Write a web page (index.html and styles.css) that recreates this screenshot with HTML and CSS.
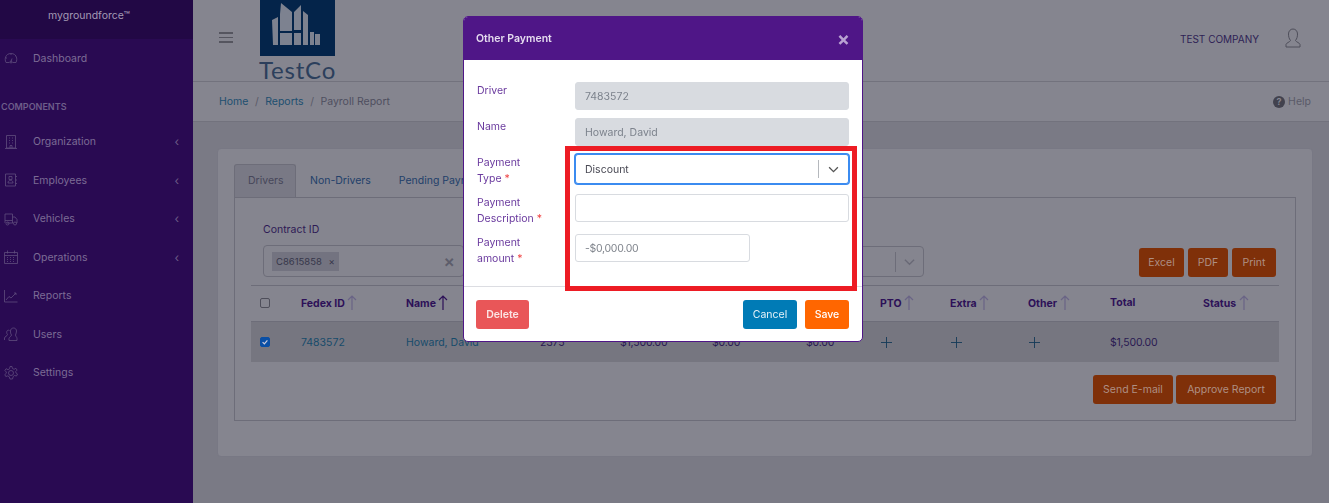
FILE: index.html
```html
<!DOCTYPE html>
<html lang="en">
<head>
  <meta charset="UTF-8">
  <title>Payroll Report</title>
  <link rel="stylesheet" href="styles.css">
</head>
<body>

<div class="layout">
  <aside class="sidebar">
    <div class="brand">mygroundforce™</div>
    <nav class="nav">
      <a class="nav-item">
        <svg class="nav-icon" viewBox="0 0 14 14"><path d="M2 11.500C.2 8 1.500 2.500 7 2.500s6.800 5.500 5 9H8.500M5.500 11.500H2M8 7.500 7 10.500"/><circle cx="7" cy="11" r="1"/><path d="M3 7h-1M11 5l1-.5M7 3v1"/></svg>
        <span>Dashboard</span>
      </a>
      <div class="nav-title">COMPONENTS</div>
      <a class="nav-item">
        <svg class="nav-icon" viewBox="0 0 14 14"><path d="M2.500.5h9v12.500h-9zM1 13.500h12M5 3h1M8 3h1M5 5.500h1M8 5.500h1M5 8h1M8 8h1M6 13v-2.500h2V13"/></svg>
        <span>Organization</span><i class="nav-caret">‹</i>
      </a>
      <a class="nav-item">
        <svg class="nav-icon" viewBox="0 0 14 14"><path d="M1.500 1h10v12h-10zM11.500 3.500H13M11.500 7H13M11.500 10.500H13M4 10c0-2 1-2.500 2.500-2.500S9 8 9 10zM5 3.500h3v3H5z"/></svg>
        <span>Employees</span><i class="nav-caret">‹</i>
      </a>
      <a class="nav-item">
        <svg class="nav-icon" viewBox="0 0 14 14"><path d="M1 11V2h7.500v9M8.500 5H11l2 2.500V11h-1M1 8.500h7.500M3 11h6.500"/><circle cx="3.500" cy="11.500" r="1.500"/><circle cx="11" cy="11.500" r="1.500"/></svg>
        <span>Vehicles</span><i class="nav-caret">‹</i>
      </a>
      <a class="nav-item">
        <svg class="nav-icon" viewBox="0 0 14 14"><path d="M.5 2.500h13v11H.5zM.5 5.500h13M3.500.5v3M10.500.5v3M3 7.500h1M6 7.500h1M9 7.500h1M3 9.500h1M6 9.500h1M9 9.500h1M3 11.500h1M6 11.500h1M9 11.500h1"/></svg>
        <span>Operations</span><i class="nav-caret">‹</i>
      </a>
      <a class="nav-item">
        <svg class="nav-icon" viewBox="0 0 14 14"><path d="M.5 1v12h13M2 11l3-3.500 2 1.500 5-5M10 4h2v2"/></svg>
        <span>Reports</span>
      </a>
      <a class="nav-item">
        <svg class="nav-icon" viewBox="0 0 14 14"><path d="M.5 13v-2c0-1.500 3-2 3-3.500C2.500 6.500 2.500 5 3 4c.5-1 2-1 2.500-.5M5 13.500v-2c0-1.500 2.500-2 2.500-3.500-1-1.500-1-2.500-1-4s1-3 3-3 3 1.500 3 3-.5 2.500-1 4c0 1.500 1.500 2 1.500 3.500v2z"/></svg>
        <span>Users</span>
      </a>
      <a class="nav-item">
        <svg class="nav-icon" viewBox="0 0 14 14"><circle cx="7" cy="7" r="2.500"/><path d="M6 .5h2l.4 2 1.700.8 1.800-1 1.200 1.800-1.400 1.400.3 1.500 1.500 1-1 2-2-.5-1.300 1.100-.7 2.400H6l-.7-2.200-1.500-.9-2 .6-1-1.900 1.500-1.300V6L.9 4.500l1.200-1.800 1.900 1 1.600-1z"/></svg>
        <span>Settings</span>
      </a>
    </nav>
  </aside>

  <div class="main">
    <header class="topbar">
      <div class="burger"><span></span><span></span><span></span></div>
      <div class="logo">
        <div class="logo-mark">
          <svg viewBox="0 0 75 56" width="75" height="56">
            <path class="logo-bld" d="M12 20l6-3v28h-5zM20 14l1-11 11 9v19H20zM20 33h12v12H20zM34 12l7-7v25h-7zM34 33h7v12h-7zM43 11l5 4v30h-5zM50 32h4v13h-4zM55 34h5v11h-5z"/>
          </svg>
        </div>
        <div class="logo-name">TestCo</div>
      </div>
      <div class="company">TEST COMPANY</div>
      <svg class="user-icon" viewBox="0 0 16 20"><path d="M1 19v-2.500c0-1.500 4-2.500 4.500-4C4 10.500 3.500 8.500 3.500 6c0-3 2-5 4.500-5s4.500 2 4.500 5c0 2.500-.5 4.500-2 6.500.5 1.500 4.500 2.500 4.500 4V19z"/></svg>
    </header>

    <div class="crumbs">
      <a>Home</a><b>/</b><a>Reports</a><b>/</b><span>Payroll Report</span>
      <div class="help"><i>?</i>Help</div>
    </div>

    <div class="content">
      <div class="card">
        <div class="tabs">
          <div class="tab active">Drivers</div>
          <div class="tab">Non-Drivers</div>
          <div class="tab">Pending Payroll</div>
        </div>
        <div class="pane">
          <div class="filters">
            <div class="filter">
              <label class="filter-label">Contract ID</label>
              <div class="multi">
                <span class="tag">C8615858 <em>×</em></span>
                <span class="multi-clear">×</span>
              </div>
            </div>
            <div class="week">
              <span class="week-sep"></span>
              <svg class="week-arrow" viewBox="0 0 12 8"><path d="M1 1.500l5 5 5-5"/></svg>
            </div>
            <div class="export">
              <button class="btn-dark btn-excel">Excel</button>
              <button class="btn-dark btn-pdf">PDF</button>
              <button class="btn-dark btn-print">Print</button>
            </div>
          </div>

          <div class="grid-row grid-head">
            <div><span class="check"></span></div>
            <div>Fedex ID <svg class="sort" viewBox="0 0 10 15"><path d="M5 15V1M1 5l4-4 4 4"/></svg></div>
            <div>Name <svg class="sort on" viewBox="0 0 10 15"><path d="M5 15V1M1 5l4-4 4 4"/></svg></div>
            <div></div>
            <div></div>
            <div></div>
            <div></div>
            <div>PTO <svg class="sort" viewBox="0 0 10 15"><path d="M5 15V1M1 5l4-4 4 4"/></svg></div>
            <div>Extra <svg class="sort" viewBox="0 0 10 15"><path d="M5 15V1M1 5l4-4 4 4"/></svg></div>
            <div>Other <svg class="sort" viewBox="0 0 10 15"><path d="M5 15V1M1 5l4-4 4 4"/></svg></div>
            <div>Total</div>
            <div>Status <svg class="sort" viewBox="0 0 10 15"><path d="M5 15V1M1 5l4-4 4 4"/></svg></div>
          </div>
          <div class="grid-row grid-data">
            <div><span class="check checked"><svg viewBox="0 0 10 10"><path d="M2 5.200l2.200 2.200L8 3"/></svg></span></div>
            <div><a>7483572</a></div>
            <div><a>Howard, David</a></div>
            <div class="money">2375</div>
            <div class="money">$1,500.00</div>
            <div class="money">$0.00</div>
            <div class="money">$0.00</div>
            <div><svg class="plus" viewBox="0 0 11 11"><path d="M5.500 0v11M0 5.500h11"/></svg></div>
            <div><svg class="plus" viewBox="0 0 11 11"><path d="M5.500 0v11M0 5.500h11"/></svg></div>
            <div><svg class="plus" viewBox="0 0 11 11"><path d="M5.500 0v11M0 5.500h11"/></svg></div>
            <div class="money">$1,500.00</div>
            <div></div>
          </div>

          <div class="actions">
            <button class="btn-dark btn-send">Send E-mail</button>
            <button class="btn-dark btn-approve">Approve Report</button>
          </div>
        </div>
      </div>
    </div>
  </div>
</div>

<div class="modal">
  <div class="modal-head">
    <h3>Other Payment</h3>
    <span class="modal-close">×</span>
  </div>
  <div class="modal-body">
    <div class="form-row short">
      <label>Driver</label>
      <input class="field" type="text" value="7483572" disabled>
    </div>
    <div class="form-row short">
      <label>Name</label>
      <input class="field" type="text" value="Howard, David" disabled>
    </div>
    <div class="form-row">
      <label>Payment<br>Type <u>*</u></label>
      <div class="field select-focus">
        <span>Discount</span>
        <span class="select-sep"></span>
        <svg class="select-arrow" viewBox="0 0 12 8"><path d="M1 1.500l5 5 5-5"/></svg>
      </div>
    </div>
    <div class="form-row">
      <label>Payment<br>Description <u>*</u></label>
      <input class="field" type="text">
    </div>
    <div class="form-row">
      <label>Payment<br>amount <u>*</u></label>
      <input class="field amount" type="text" placeholder="-$0,000.00">
    </div>
  </div>
  <div class="modal-foot">
    <button class="btn btn-delete">Delete</button>
    <button class="btn btn-cancel">Cancel</button>
    <button class="btn btn-save">Save</button>
  </div>
</div>

<div class="callout"></div>

</body>
</html>
```

FILE: styles.css
```css
* {
  box-sizing: border-box;
}

body {
  margin: 0;
  height: 503px;
  overflow: hidden;
  font-family: Inter, "Noto Sans", sans-serif;
  font-size: 10.5px;
  background-color: #7a7a85;
  color: #33204f;
}

button {
  font-family: inherit;
  font-size: inherit;
}

.layout {
  display: flex;
  height: 503px;
}

/* sidebar */
.sidebar {
  width: 193px;
  flex-shrink: 0;
  background-color: #290a52;
  color: #7c6c95;
}

.brand {
  height: 39px;
  padding-top: 9px;
  padding-left: 48px;
  background-color: #220845;
  color: #a49ab4;
}

.nav-item {
  display: flex;
  align-items: center;
  height: 38.500px;
  padding-left: 4px;
}

.nav-item span {
  margin-left: 15px;
}

.nav-icon {
  width: 14px;
  height: 14px;
  fill: none;
  stroke: #5f4c7d;
  stroke-width: 0.8;
}

.nav-caret {
  margin-left: auto;
  margin-right: 14px;
  font-style: normal;
  font-size: 12px;
  color: #6c5b87;
}

.nav-title {
  height: 31px;
  padding-top: 23px;
  padding-left: 1px;
  margin-bottom: 14px;
  font-size: 9px;
  font-weight: 600;
  color: #6e5e8a;
}

/* main column */
.main {
  flex: 1;
  min-width: 0;
}

.topbar {
  display: flex;
  align-items: center;
  height: 82px;
  padding-left: 26px;
  padding-right: 28px;
  background-color: #85858f;
  border-bottom: 1px solid #72727d;
}

.burger {
  display: flex;
  flex-direction: column;
  gap: 3px;
  width: 14px;
  margin-top: -6px;
}

.burger span {
  height: 1.500px;
  background-color: #55555f;
}

.logo {
  align-self: flex-start;
  margin-left: 27px;
  width: 75px;
}

.logo-mark {
  height: 56px;
  background-color: #04244a;
}

.logo-mark svg {
  display: block;
}

.logo-bld {
  fill: #7d8290;
}

.logo-name {
  margin-left: -1px;
  padding-top: 1px;
  font-family: Lato, sans-serif;
  font-size: 24px;
  line-height: 25px;
  letter-spacing: 0.800px;
  white-space: nowrap;
  color: #2c3f5c;
}

.company {
  margin-left: auto;
  margin-top: -4px;
  font-size: 10px;
  color: #2e1f55;
}

.user-icon {
  width: 16px;
  height: 20px;
  margin-left: 26px;
  margin-top: -6px;
  fill: none;
  stroke: #4e4e5a;
  stroke-width: 1;
}

.crumbs {
  display: flex;
  align-items: center;
  height: 40px;
  padding-left: 26px;
  padding-right: 18px;
  background-color: #85858f;
  border-bottom: 1px solid #72727d;
  color: #4f4f5f;
}

.crumbs a {
  color: #204f6f;
}

.crumbs b {
  margin: 0 6.500px;
  font-weight: 400;
  color: #5a5a68;
}

.help {
  display: flex;
  align-items: center;
  margin-left: auto;
  color: #5a5a68;
}

.help i {
  width: 12px;
  height: 12px;
  margin-right: 3px;
  border-radius: 50%;
  background-color: #42424e;
  color: #85858f;
  font-size: 9px;
  font-style: normal;
  font-weight: 700;
  line-height: 12px;
  text-align: center;
}

.content {
  padding: 26px 16px 0 24px;
}

.card {
  height: 309px;
  padding: 15px 16px;
  background-color: #85858f;
  border: 1px solid #787884;
  border-radius: 4px;
}

.tabs {
  display: flex;
  height: 33px;
}

.tab {
  padding: 10px 14px 0;
  color: #22406a;
}

.tab.active {
  width: 62px;
  padding-top: 9px;
  padding-left: 13px;
  background-color: #797985;
  border: 1px solid #6d6d79;
  border-bottom: 0;
  border-radius: 3px 3px 0 0;
  color: #47475a;
}

.pane {
  height: 224px;
  padding: 24px 16px 0;
  border: 1px solid #6d6d79;
}

.filters {
  display: flex;
  align-items: flex-end;
  height: 55px;
  padding: 0 3px 0 12px;
}

.filter-label {
  display: block;
  margin-bottom: 8px;
  line-height: 14px;
  color: #2e1a55;
}

.multi {
  display: flex;
  align-items: center;
  width: 201px;
  height: 32px;
  padding: 0 8px;
  border: 1px solid #6d6d79;
  border-radius: 4px;
}

.tag {
  height: 19px;
  padding: 0 4px;
  background-color: #737380;
  color: #36364a;
  font-size: 9.500px;
  line-height: 19px;
}

.tag em {
  margin-left: 4px;
  font-style: normal;
}

.multi-clear {
  margin-left: auto;
  color: #5d5d6b;
  font-size: 17px;
  font-weight: 600;
}

.week {
  display: flex;
  align-items: center;
  justify-content: flex-end;
  width: 460px;
  height: 31px;
  border: 1px solid #6d6d79;
  border-radius: 4px;
}

.week-sep {
  width: 1px;
  height: 20px;
  background-color: #6d6d79;
}

.week-arrow {
  width: 11px;
  height: 8px;
  margin: 0 8px;
  fill: none;
  stroke: #696976;
  stroke-width: 1.500;
}

.export {
  display: flex;
  gap: 4px;
  margin-left: auto;
}

.btn-dark {
  height: 29px;
  padding: 0;
  border: 0;
  border-radius: 3px;
  background-color: #7f3009;
  color: #ae8f83;
}

.btn-excel {
  width: 45px;
}

.btn-pdf {
  width: 40px;
}

.btn-print {
  width: 44px;
}

.btn-send {
  width: 80px;
}

.btn-approve {
  width: 100px;
}

.grid-row {
  display: grid;
  grid-template-columns: 50px 105px 134px 80px 92px 94px 74px 70px 78px 82px 93px 76px;
  align-items: center;
}

.grid-row > div:first-child {
  padding-left: 9px;
}

.grid-head {
  height: 37px;
  margin-top: 8px;
  padding-bottom: 2px;
  border-top: 1px solid #6d6d79;
  border-bottom: 1px solid #6d6d79;
  font-weight: 700;
  color: #2d1158;
}

.grid-data {
  height: 40px;
  background-color: #767680;
  color: #2a1a52;
}

.grid-data a {
  color: #174b6b;
}

.money {
  letter-spacing: -0.200px;
}

.check {
  display: block;
  width: 10px;
  height: 10px;
  border: 1px solid #4e4e5a;
  border-radius: 2px;
}

.check.checked {
  background-color: #0a4fa5;
  border-color: #0a4fa5;
}

.check svg {
  display: block;
  width: 8px;
  height: 8px;
  fill: none;
  stroke: #ccd;
  stroke-width: 1.500;
}

.sort {
  width: 10px;
  height: 15px;
  vertical-align: -3px;
  fill: none;
  stroke: #6a6486;
  stroke-width: 1.200;
}

.sort.on {
  stroke: #2d1158;
}

.plus {
  display: block;
  width: 11px;
  height: 11px;
  margin-left: 1px;
  fill: none;
  stroke: #143a58;
  stroke-width: 0.900;
}

.actions {
  display: flex;
  justify-content: flex-end;
  gap: 3px;
  margin-top: 13px;
  padding-right: 3px;
}

/* modal */
.modal {
  position: fixed;
  top: 16px;
  left: 463px;
  width: 400px;
  height: 326px;
  background-color: #fff;
  border: 1px solid #4f1687;
  border-radius: 5px;
  overflow: hidden;
}

.modal-head {
  display: flex;
  justify-content: space-between;
  height: 43px;
  padding: 15px 12px 0;
  background-color: #4f1687;
}

.modal-head h3 {
  margin: 0;
  font-size: 10.500px;
  font-weight: 600;
  line-height: 14px;
  color: #e5dcef;
}

.modal-close {
  margin-top: 1px;
  font-size: 19px;
  font-weight: 700;
  line-height: 14px;
  color: #b9a2d2;
}

.modal-body {
  display: flex;
  flex-direction: column;
  gap: 8px;
  height: 227px;
  padding: 22px 13px 0;
  border-bottom: 1px solid #dcdde2;
}

.form-row {
  display: grid;
  grid-template-columns: 98px 274px;
  align-items: start;
  height: 32px;
}

.form-row.short {
  height: 28px;
}

.form-row label {
  padding-top: 1px;
  line-height: 16px;
  color: #6a3a9e;
}

.form-row u {
  color: #ef4444;
  text-decoration: none;
}

.field {
  width: 274px;
  height: 28px;
  padding: 0 9px;
  background-color: #fff;
  border: 1px solid #d8dbe0;
  border-radius: 3px;
  font-family: inherit;
  font-size: 10.500px;
  color: #4a4a55;
}

.field:disabled {
  background-color: #d8dbe0;
  color: #7c828c;
  opacity: 1;
}

.field::placeholder {
  color: #80858d;
}

.amount {
  width: 175px;
  letter-spacing: -0.300px;
}

.select-focus {
  display: flex;
  align-items: center;
  height: 30px;
  padding-right: 0;
  border-color: #3b8bf0;
  box-shadow: 0 0 0 1px #3b8bf0;
}

.select-sep {
  width: 1px;
  height: 18px;
  margin-left: auto;
  background-color: #b5b8bd;
}

.select-arrow {
  width: 11px;
  height: 7px;
  margin: 0 9px;
  fill: none;
  stroke: #555;
  stroke-width: 1.500;
}

.modal-foot {
  display: flex;
  gap: 8px;
  padding: 13px 13px 0 12px;
}

.btn {
  height: 29px;
  border: 0;
  border-radius: 3px;
  color: #fff;
}

.btn-delete {
  width: 53px;
  margin-right: auto;
  background-color: #e95658;
  font-weight: 600;
  color: #fbe4e4;
}

.btn-cancel {
  width: 54px;
  background-color: #007bb6;
  color: #e5f2f8;
}

.btn-save {
  width: 44px;
  background-color: #ff6600;
  font-weight: 500;
}

/* annotation drawn over the form */
.callout {
  position: fixed;
  top: 146px;
  left: 565px;
  width: 292px;
  height: 145px;
  border: 5px solid #ed1c24;
}
```
